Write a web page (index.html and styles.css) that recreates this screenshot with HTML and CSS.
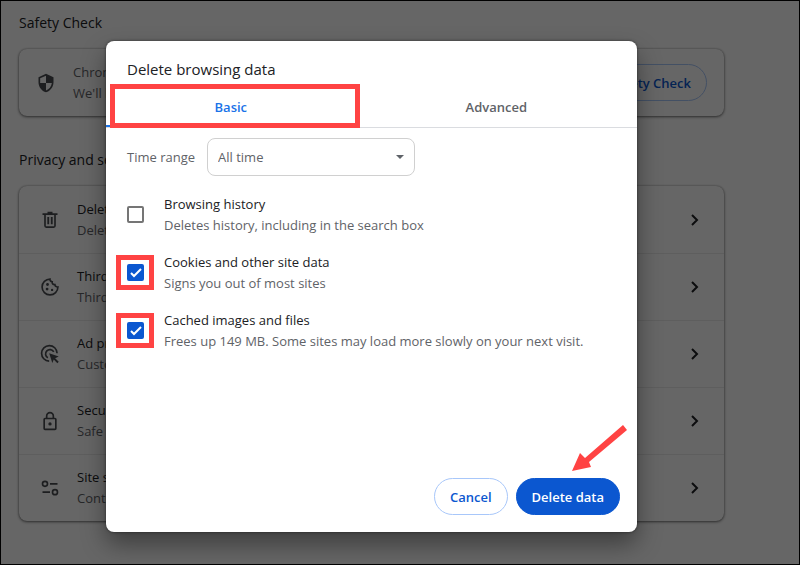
FILE: index.html
```html
<!DOCTYPE html>
<html lang="en">
<head>
    <meta charset="UTF-8">
    <meta name="viewport" content="width=device-width, initial-scale=1.0">
    <title>Settings - Delete browsing data</title>
    <link rel="stylesheet" href="styles.css">
</head>
<body>
    <main class="settings">
        <h2>Safety Check</h2>
        <section class="card">
            <div class="safety-row">
                <svg class="icon" viewBox="0 0 24 24"><path fill-rule="evenodd" d="M12 1 3 5v6c0 5.55 3.84 10.74 9 12 5.16-1.26 9-6.45 9-12V5l-9-4zm0 2.2v8.8h7c-.53 4.11-3.27 7.78-7 8.93V12H5V6.3l7-3.1z"/></svg>
                <div class="row-text">
                    <span class="row-sub">Chrome</span>
                    <span class="row-sub">We'll let</span>
                </div>
                <button type="button" class="btn btn-outline">Go to Safety Check</button>
            </div>
        </section>

        <h2>Privacy and security</h2>
        <section class="card">
            <a href="#" class="row">
                <svg class="icon" viewBox="0 0 24 24"><path fill-rule="evenodd" d="M9 2h6v2h6v2h-2v13a2.500 2.500 0 0 1-2.500 2.500h-9A2.500 2.500 0 0 1 5 19V6H3V4h6zM7 6v13.500h10V6zM8.800 8.500h2.200v8.500H8.800zM13 8.500h2.200v8.500H13z"/></svg>
                <div class="row-text">
                    <span>Delete data</span>
                    <span class="row-sub">Delete history</span>
                </div>
                <svg class="chevron" viewBox="0 0 10 12"><path d="M2 1l5 5-5 5"/></svg>
            </a>
            <a href="#" class="row">
                <svg class="icon icon-line" viewBox="0 0 24 24">
                    <path d="M12 2.500A9.500 9.500 0 1 0 21.500 12c-2 .2-3.500-1-3.600-2.900-2.400.2-3.700-1.400-3.300-3.400C12.700 5.500 11.800 4.200 12 2.500z"/>
                    <circle class="dot" cx="9" cy="9" r="1.700"/>
                    <circle class="dot" cx="8.500" cy="14.500" r="1.700"/>
                    <circle class="dot" cx="14.500" cy="15.500" r="1.400"/>
                </svg>
                <div class="row-text">
                    <span>Third-party cookies</span>
                    <span class="row-sub">Third-party cookies</span>
                </div>
                <svg class="chevron" viewBox="0 0 10 12"><path d="M2 1l5 5-5 5"/></svg>
            </a>
            <a href="#" class="row">
                <svg class="icon icon-line" viewBox="0 0 24 24">
                    <path d="M11 20.500A9.300 9.300 0 1 1 20.500 11M9.500 16.500A5.200 5.200 0 1 1 16.500 9.500"/>
                    <path class="dot" d="M11 11l11.500 4-4.300 2 4.300 4.300-1.700 1.700-4.300-4.300-1.700 4z"/>
                </svg>
                <div class="row-text">
                    <span>Ad privacy</span>
                    <span class="row-sub">Customize ads</span>
                </div>
                <svg class="chevron" viewBox="0 0 10 12"><path d="M2 1l5 5-5 5"/></svg>
            </a>
            <a href="#" class="row">
                <svg class="icon icon-line" viewBox="0 0 24 24">
                    <rect x="5" y="9" width="14" height="13" rx="1"/>
                    <path d="M8 9V6a4 4 0 0 1 8 0v3"/>
                    <circle class="dot" cx="12" cy="15.500" r="2"/>
                </svg>
                <div class="row-text">
                    <span>Security</span>
                    <span class="row-sub">Safe Browsing</span>
                </div>
                <svg class="chevron" viewBox="0 0 10 12"><path d="M2 1l5 5-5 5"/></svg>
            </a>
            <a href="#" class="row">
                <svg class="icon icon-line" viewBox="0 0 24 24">
                    <circle cx="6" cy="7" r="3"/>
                    <circle cx="18" cy="17" r="3"/>
                    <path d="M12 7h9M3 17h9"/>
                </svg>
                <div class="row-text">
                    <span>Site settings</span>
                    <span class="row-sub">Controls</span>
                </div>
                <svg class="chevron" viewBox="0 0 10 12"><path d="M2 1l5 5-5 5"/></svg>
            </a>
        </section>
    </main>

    <div class="overlay">
        <form class="dialog" role="dialog" aria-labelledby="dialogTitle">
            <h1 id="dialogTitle">Delete browsing data</h1>
            <div class="tabs" role="tablist">
                <button type="button" class="tab active" role="tab" aria-selected="true">Basic</button>
                <button type="button" class="tab" role="tab" aria-selected="false">Advanced</button>
                <span class="mark mark-tab"></span>
            </div>

            <div class="time-range">
                <label for="timeRange">Time range</label>
                <div class="select-wrap">
                    <select id="timeRange">
                        <option>All time</option>
                    </select>
                    <svg class="arrow-down" viewBox="0 0 8 4"><path d="M0 0h8L4 4z"/></svg>
                </div>
            </div>

            <div class="options">
                <div class="option">
                    <div class="check">
                        <input type="checkbox" id="history">
                    </div>
                    <label for="history">
                        <span>Browsing history</span>
                        <span class="option-sub">Deletes history, including in the search box</span>
                    </label>
                </div>
                <div class="option">
                    <div class="check">
                        <input type="checkbox" id="cookies" checked>
                        <svg class="tick" viewBox="0 0 17 17"><path d="M4 9l3 3 7-7"/></svg>
                        <span class="mark mark-check"></span>
                    </div>
                    <label for="cookies">
                        <span>Cookies and other site data</span>
                        <span class="option-sub">Signs you out of most sites</span>
                    </label>
                </div>
                <div class="option">
                    <div class="check">
                        <input type="checkbox" id="cache" checked>
                        <svg class="tick" viewBox="0 0 17 17"><path d="M4 9l3 3 7-7"/></svg>
                        <span class="mark mark-check"></span>
                    </div>
                    <label for="cache">
                        <span>Cached images and files</span>
                        <span class="option-sub">Frees up 149 MB. Some sites may load more slowly on your next visit.</span>
                    </label>
                </div>
            </div>

            <div class="actions">
                <button type="button" class="btn btn-outline">Cancel</button>
                <button type="submit" class="btn btn-primary">Delete data</button>
                <svg class="pointer" viewBox="0 0 56 48"><path d="M1 46L9 28l5 5L52 0l4 5L18 37l2 5z"/></svg>
            </div>
        </form>
    </div>
</body>
</html>
```

FILE: styles.css
```css
* {
    box-sizing: border-box;
}

body {
    position: relative;
    min-height: 100vh;
    margin: 0;
    border: 1px solid #000;
    background-color: #fff;
    color: #202124;
    font-family: "Open Sans", "Noto Sans", sans-serif;
    font-size: 13px;
    line-height: 21px;
}

button, select {
    font-family: inherit;
    font-size: 13px;
}

h1, h2 {
    margin: 0;
    font-size: 14px;
    font-weight: 400;
}

/* Settings page */
.settings {
    padding: 11px 75px 0 18px;
}

.card {
    margin: 16px 0 33px;
    border-radius: 8px;
    box-shadow: 0 1px 3px rgba(0, 0, 0, 0.5), 0 0 2px rgba(0, 0, 0, 0.3);
}

.safety-row, .row {
    display: flex;
    align-items: center;
    height: 67px;
    padding: 0 17px;
}

.row {
    padding: 0 24px 0 21px;
    color: inherit;
    text-decoration: none;
}

.row + .row {
    border-top: 1px solid #ececec;
}

.row-text {
    display: flex;
    flex: 1;
    flex-direction: column;
    margin-left: 17px;
}

.row-sub {
    color: #5f6368;
}

.icon {
    width: 20px;
    height: 20px;
    fill: #4a4d51;
}

.icon-line {
    fill: none;
    stroke: #4a4d51;
    stroke-width: 2;
}

.icon-line .dot {
    fill: #4a4d51;
    stroke: none;
}

.chevron {
    width: 10px;
    height: 12px;
    fill: none;
    stroke: #202124;
    stroke-width: 2;
}

.btn {
    height: 37px;
    padding: 0 15px;
    border: 1px solid #0b57d0;
    border-radius: 19px;
    font-weight: 600;
}

.btn-outline {
    border-color: #a8c7fa;
    background-color: transparent;
    color: #0b57d0;
}

.btn-primary {
    background-color: #0b57d0;
    color: #fff;
}

/* Dialog */
.overlay {
    position: absolute;
    inset: 0;
    display: flex;
    align-items: flex-start;
    justify-content: center;
    padding: 40px 57px 32px 0;
    background-color: rgba(0, 0, 0, 0.6);
}

.dialog {
    width: 531px;
    max-width: 100%;
    border-radius: 8px;
    background-color: #fff;
    box-shadow: 0 0 3px rgba(0, 0, 0, 0.5), 0 12px 24px rgba(0, 0, 0, 0.4);
}

.dialog h1 {
    padding: 18px 21px 7px;
    font-size: 15px;
}

.tabs {
    position: relative;
    display: flex;
    height: 41px;
    border-bottom: 1px solid #dadce0;
}

.tab {
    flex: 1;
    padding: 2px 0 0;
    border: 0;
    border-bottom: 2px solid transparent;
    background: none;
    color: #5f6368;
    font-weight: 600;
}

.tab.active {
    flex: 0 0 47%;
    border-color: #1a73e8;
    color: #1a73e8;
}

.mark {
    position: absolute;
    border: 5px solid #ff4343;
    pointer-events: none;
}

.mark-tab {
    top: -3px;
    left: 4px;
    width: 250px;
    height: 44px;
}

.mark-check {
    top: -9px;
    left: -11px;
    width: 38px;
    height: 35px;
}

.time-range {
    display: flex;
    align-items: center;
    gap: 12px;
    padding: 10px 21px 0;
    color: #5f6368;
}

.select-wrap {
    position: relative;
    width: 208px;
}

.select-wrap select {
    display: block;
    width: 100%;
    height: 38px;
    padding: 0 10px;
    border: 1px solid #d0d0d0;
    border-radius: 8px;
    background-color: #fff;
    color: #5f6368;
    appearance: none;
}

.arrow-down {
    position: absolute;
    top: 17px;
    right: 11px;
    width: 8px;
    height: 4px;
    fill: #5f6368;
    pointer-events: none;
}

.options {
    display: flex;
    flex-direction: column;
    gap: 16px;
    padding: 18px 21px 0;
}

.option {
    display: flex;
    align-items: flex-start;
    gap: 20px;
}

.option label {
    display: flex;
    flex-direction: column;
}

.option-sub {
    color: #5f6368;
}

.check {
    position: relative;
    width: 17px;
    height: 17px;
    margin-top: 12px;
}

.check input {
    display: block;
    width: 17px;
    height: 17px;
    margin: 0;
    border: 2px solid #757575;
    border-radius: 2px;
    appearance: none;
}

.check input:checked {
    border-color: #0b57d0;
    background-color: #0b57d0;
}

.tick {
    position: absolute;
    inset: 0;
    fill: none;
    stroke: #fff;
    stroke-width: 2;
    pointer-events: none;
}

.check input:not(:checked) + .tick {
    display: none;
}

.actions {
    position: relative;
    display: flex;
    justify-content: flex-end;
    gap: 8px;
    padding: 126px 17px 17px;
}

.pointer {
    position: absolute;
    top: 73px;
    right: 10px;
    width: 56px;
    height: 48px;
    fill: #ff4343;
}
```
